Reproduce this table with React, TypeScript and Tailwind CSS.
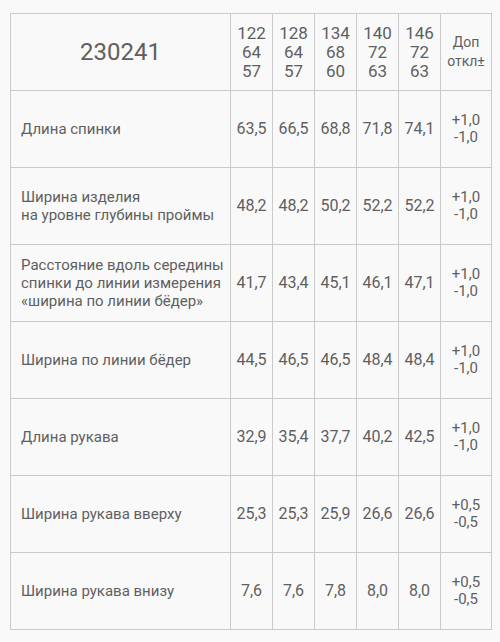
import React from 'react';

const sizes = [
  ['122', '64', '57'],
  ['128', '64', '57'],
  ['134', '68', '60'],
  ['140', '72', '63'],
  ['146', '72', '63'],
];

const rows = [
  { label: ['Длина спинки'], values: ['63,5', '66,5', '68,8', '71,8', '74,1'], tol: ['+1,0', '-1,0'] },
  { label: ['Ширина изделия', 'на уровне глубины проймы'], values: ['48,2', '48,2', '50,2', '52,2', '52,2'], tol: ['+1,0', '-1,0'] },
  {
    label: ['Расстояние вдоль середины', 'спинки до линии измерения', '«ширина по линии бёдер»'],
    values: ['41,7', '43,4', '45,1', '46,1', '47,1'],
    tol: ['+1,0', '-1,0'],
  },
  { label: ['Ширина по линии бёдер'], values: ['44,5', '46,5', '46,5', '48,4', '48,4'], tol: ['+1,0', '-1,0'] },
  { label: ['Длина рукава'], values: ['32,9', '35,4', '37,7', '40,2', '42,5'], tol: ['+1,0', '-1,0'] },
  { label: ['Ширина рукава вверху'], values: ['25,3', '25,3', '25,9', '26,6', '26,6'], tol: ['+0,5', '-0,5'] },
  { label: ['Ширина рукава внизу'], values: ['7,6', '7,6', '7,8', '8,0', '8,0'], tol: ['+0,5', '-0,5'] },
];

export default function App() {
  return (
    <div
      className="w-[500px] h-[642px] bg-[#f9f9f9] pt-[13px] pl-[10px] text-[#5f5f5f]"
      style={{ fontFamily: 'Roboto, "Liberation Sans", sans-serif' }}
    >
      <table className="border-collapse table-fixed w-[481px]">
        <colgroup>
          <col className="w-[220px]" />
          <col className="w-[42px]" />
          <col className="w-[42px]" />
          <col className="w-[42px]" />
          <col className="w-[42px]" />
          <col className="w-[42px]" />
          <col className="w-[51px]" />
        </colgroup>
        <thead>
          <tr className="h-[77px]">
            <th className="border border-[#cacaca] text-[24px] font-normal text-center">230241</th>
            {sizes.map((s, i) => (
              <th key={i} className="border border-[#cacaca] text-[17px] leading-[19px] font-normal text-center p-0">
                {s.map((n) => (
                  <div key={n}>{n}</div>
                ))}
              </th>
            ))}
            <th className="border border-[#cacaca] text-[14px] leading-[19px] font-normal text-center p-0">
              <div>Доп</div>
              <div>откл±</div>
            </th>
          </tr>
        </thead>
        <tbody>
          {rows.map((r, i) => (
            <tr key={i} className="h-[77px]">
              <td className="border border-[#cacaca] pl-[10px] pr-0 text-[15px] leading-[18px]">
                {r.label.map((l) => (
                  <div key={l}>{l}</div>
                ))}
              </td>
              {r.values.map((v, j) => (
                <td key={j} className="border border-[#cacaca] text-center text-[16px] p-0">
                  {v}
                </td>
              ))}
              <td className="border border-[#cacaca] text-center text-[15px] leading-[17px] p-0">
                <div>{r.tol[0]}</div>
                <div>{r.tol[1]}</div>
              </td>
            </tr>
          ))}
        </tbody>
      </table>
    </div>
  );
}
